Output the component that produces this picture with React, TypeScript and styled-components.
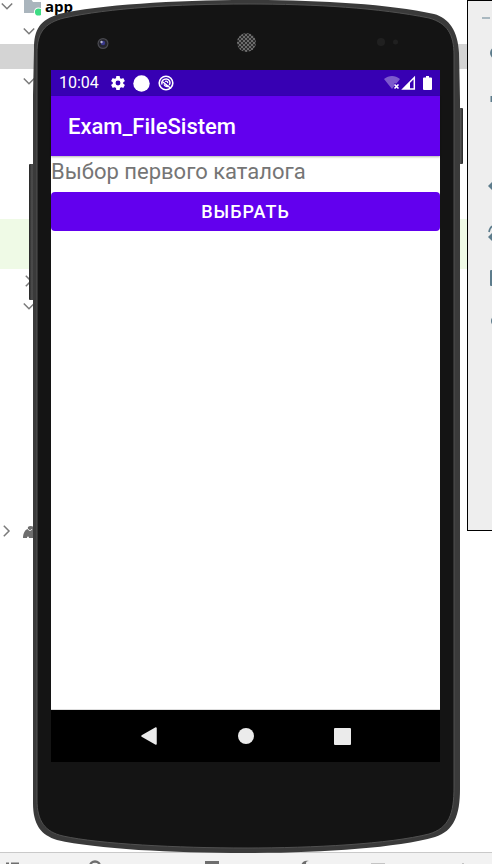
import React from "react";
import styled, { createGlobalStyle } from "styled-components";

const GlobalStyle = createGlobalStyle`
  * { box-sizing: border-box; }
  body { margin: 0; background: #ffffff; font-family: Roboto, "Liberation Sans", sans-serif; }
`;

const Desktop = styled.div`
  position: relative;
  display: flex;
  flex-direction: column;
  height: 100vh;
  overflow: hidden;
`;

const Workspace = styled.div`
  display: flex;
  flex: 1;
  min-height: 0;
  align-items: flex-start;
`;

const ProjectTree = styled.ul`
  flex: 1;
  min-width: 0;
  margin: -6px 0 0;
  padding: 0;
  list-style: none;
`;

const TreeRow = styled.li<{ $depth?: number; $tone?: "selected" | "added" }>`
  display: flex;
  align-items: center;
  gap: 8px;
  height: 25px;
  padding-left: ${(p) => (p.$depth ? 22 : 0)}px;
  background: ${(p) =>
    p.$tone === "selected" ? "#d4d4d4" : p.$tone === "added" ? "#effae6" : "transparent"};
  svg { flex: none; }
`;

const ModuleName = styled.span`
  margin-left: -4px;
  font: 700 15px/13px "Open Sans", sans-serif;
  color: #000000;
`;

const EmulatorTools = styled.aside`
  flex: none;
  width: 25px;
  height: 531px;
  overflow: hidden;
  border: 1px solid #000000;
  border-right: 0;
  background: #eeeeee;
  svg { display: block; }
`;

const ToolWindowBar = styled.footer`
  flex: none;
  height: 12px;
  overflow: hidden;
  border-top: 1px solid #c9c9c9;
  background: #f2f2f2;
  svg { display: block; width: 100%; }
`;

const Phone = styled.main`
  position: absolute;
  inset: 0 31px 10px 29px;
  display: flex;
  padding: 70px 21px 92px 22px;
`;

const PhoneShell = styled.svg`
  position: absolute;
  inset: 0;
  width: 100%;
  height: 100%;
  overflow: visible;
`;

const Screen = styled.section`
  position: relative;
  display: flex;
  flex: 1;
  min-width: 0;
  flex-direction: column;
  background: #ffffff;
`;

const StatusBar = styled.div`
  display: flex;
  align-items: center;
  justify-content: space-between;
  height: 26px;
  padding: 0 8px;
  background: #3700b3;
  color: #ffffff;
  font-size: 16px;
  line-height: 26px;
`;

const StatusGroup = styled.div<{ $gap: number }>`
  display: flex;
  align-items: center;
  gap: ${(p) => p.$gap}px;
  svg { display: block; }
`;

const Clock = styled.time`
  margin-right: 4px;
`;

const AppBar = styled.header`
  display: flex;
  align-items: center;
  height: 60px;
  padding: 2px 17px 0;
  background: #6200ee;
  box-shadow: 0 1px 2px rgba(0, 0, 0, 0.3);
`;

const Title = styled.h1`
  margin: 0;
  color: #ffffff;
  font-size: 22px;
  font-weight: 500;
  line-height: 28px;
`;

const Content = styled.div`
  display: flex;
  flex: 1;
  flex-direction: column;
  gap: 4px;
  border-bottom: 1px solid #dddddd;
`;

const Caption = styled.p`
  margin: 0;
  color: #757575;
  font-size: 22px;
  line-height: 32px;
`;

const SelectButton = styled.button`
  height: 39px;
  padding: 0 16px;
  border: 0;
  border-radius: 4px;
  background: #6200ee;
  color: #ffffff;
  font: 500 18px/24px Roboto, sans-serif;
  letter-spacing: 1px;
  text-transform: uppercase;
`;

const NavBar = styled.nav`
  display: grid;
  grid-template-columns: repeat(3, 97px);
  justify-content: center;
  height: 52px;
  background: #000000;
`;

const NavButton = styled.button`
  display: grid;
  place-items: center;
  padding: 0;
  border: 0;
  background: none;
  svg { display: block; }
`;

const Chevron = ({ open }: { open?: boolean }) => (
  <svg width="13" height="14" viewBox="0 0 13 14" fill="none" stroke="#7a7a7a" strokeWidth="1.5">
    <path d={open ? "M1.8 3.5 7 8.7 12.2 3.5" : "M3.8 .8 9 6 3.8 11.2"} />
  </svg>
);

const ModuleFolder = () => (
  <svg width="20" height="20" viewBox="0 0 20 20">
    <path d="M3 2h7l2 3h9v11H3z" fill="#aab5bd" />
    <circle cx="17.5" cy="15" r="4.6" fill="#fff" />
    <circle cx="17.5" cy="15" r="3.6" fill="#3ddc84" />
  </svg>
);

const GradleElephant = () => (
  <svg width="20" height="16" viewBox="0 0 20 16">
    <path d="M2 14C2 9 4.5 5 7 5 6 2.500 9 1 13 3c4 1 6 5 6 11h-4v-3H12v3H8c0-2-2-2-2 0z" fill="#6e6e6e" />
    <path d="M7 5c1 2 3 2 4 0" fill="none" stroke="#fff" strokeWidth="1" />
  </svg>
);

type Row = { depth?: number; tone?: "selected" | "added"; chevron?: "open" | "closed"; kind?: "module" | "gradle" };

const rows: Row[] = [
  { chevron: "open", kind: "module" },
  { depth: 1, chevron: "open" },
  { tone: "selected" },
  { depth: 1, chevron: "open" },
  {}, {}, {}, {}, {},
  { tone: "added" },
  { tone: "added" },
  { depth: 1, chevron: "closed" },
  { depth: 1, chevron: "open" },
  {}, {}, {}, {}, {}, {}, {}, {},
  { chevron: "closed", kind: "gradle" },
];

const ToolIcons = () => (
  <svg width="24" height="340" viewBox="0 0 24 340" fill="#5d7c8c">
    <path d="M14 16h8v2h-8z" fill="#a9b8c0" />
    <circle cx="28" cy="52" r="5" fill="none" stroke="#5d7c8c" strokeWidth="2" />
    <path d="M22.5 95h5v6h-5z" />
    <path d="m20 185 5-5v10z" />
    <path d="M21 231c1-5 3-6 5-6" fill="none" stroke="#5d7c8c" strokeWidth="1.7" />
    <path d="m20 236 5-5v10z" />
    <rect x="22" y="269" width="10" height="16" rx="1" />
    <circle cx="29" cy="320" r="6" />
  </svg>
);

const BottomIcons = () => (
  <svg height="11" viewBox="0 0 492 11" preserveAspectRatio="xMinYMin slice" fill="#6e6e6e">
    <path d="M6 9.5h3v2H6zM11 9.5h8v2h-8z" />
    <circle cx="95" cy="13.5" r="5" fill="none" stroke="#6e6e6e" strokeWidth="2.4" />
    <path d="M205 8h14v4h-14z" />
    <path d="M301 12c2-4 4-5 8-4-3 0-3 1-3 4z" />
    <path d="M371 10h14v2h-14zM462 10h2v2h-2z" fill="#c4c4c4" />
  </svg>
);

const BODY =
  "M4 95 5 49C5 29 11 20 30 14C70 5 145 0 218 0S358 4 405 14C420 18 429 31 430 53L431 100V789C431 815 425 831 406 837C367 848 292 853 217 853S68 849 28 840C12 835 4 825 4 803Z";
const FACE =
  "M8 95V53C8 33 15 23 35 18C80 8 148 4 218 4S350 8 400 18C418 23 425 34 425 55V787C425 814 420 828 400 834C360 844 285 848 217 848S70 844 34 836C16 832 8 821 8 800Z";

const Shell = () => (
  <PhoneShell viewBox="0 0 432 854" preserveAspectRatio="none" aria-hidden="true">
    <defs>
      <pattern id="grille" width="4" height="4" patternUnits="userSpaceOnUse">
        <rect width="4" height="4" fill="#6c6c6c" />
        <circle cx="1" cy="1" r="1" fill="#191919" />
        <circle cx="3" cy="3" r="1" fill="#191919" />
      </pattern>
      <linearGradient id="keys" x1="0" x2="1">
        <stop offset="0" stopColor="#252525" />
        <stop offset=".5" stopColor="#505050" />
        <stop offset="1" stopColor="#252525" />
      </linearGradient>
    </defs>
    <rect x="0" y="164" width="6" height="136" rx="1" fill="url(#keys)" />
    <rect x="429" y="108" width="5" height="56" rx="1" fill="url(#keys)" />
    <path d={BODY} fill="#3a3a3a" />
    <path d={FACE} fill="#141414" stroke="#505050" strokeWidth="1" />
    <circle cx="74" cy="43.5" r="5.5" fill="#4a4a50" />
    <circle cx="74" cy="43.5" r="4.3" fill="#24242c" />
    <circle cx="74" cy="43" r="2.2" fill="#38388a" />
    <circle cx="72.5" cy="42" r="1.2" fill="#b8b8d0" />
    <circle cx="217.5" cy="42.5" r="9.5" fill="url(#grille)" />
    <circle cx="352" cy="42" r="4" fill="#202020" />
    <circle cx="366.5" cy="42" r="2.5" fill="#202020" />
  </PhoneShell>
);

const Gear = () => (
  <svg width="14" height="14" viewBox="2 2 20 20" fill="#fff">
    <path d="M19.43 12.98c.04-.32.07-.64.07-.98s-.03-.66-.07-.98l2.11-1.65c.19-.15.24-.42.12-.64l-2-3.46c-.12-.22-.39-.3-.61-.22l-2.49 1c-.52-.4-1.08-.73-1.69-.98l-.38-2.65A.49.49 0 0 0 14 2h-4c-.25 0-.46.18-.49.42l-.38 2.65c-.61.25-1.17.59-1.69.98l-2.49-1c-.23-.09-.49 0-.61.22l-2 3.46c-.13.22-.07.49.12.64l2.11 1.65c-.04.32-.07.65-.07.98s.03.66.07.98l-2.11 1.65c-.19.15-.24.42-.12.64l2 3.46c.12.22.39.3.61.22l2.49-1c.52.4 1.08.73 1.69.98l.38 2.65c.03.24.24.42.49.42h4c.25 0 .46-.18.49-.42l.38-2.65c.61-.25 1.17-.59 1.69-.98l2.49 1c.23.09.49 0 .61-.22l2-3.46c.12-.22.07-.49-.12-.64zM12 15.5A3.5 3.5 0 1 1 12 8.5a3.5 3.5 0 0 1 0 7z" />
  </svg>
);

const Dot = () => (
  <svg width="17" height="17" viewBox="0 0 17 17"><circle cx="8.5" cy="8.5" r="8.2" fill="#fff" /></svg>
);

const DebugIcon = () => (
  <svg width="16" height="16" viewBox="0 0 16 16" fill="none" stroke="#fff">
    <circle cx="8" cy="8" r="6.8" strokeWidth="1.6" />
    <path d="M4 9.5C3 6 5.5 3.8 8.5 4c3 .2 4.500 3.500 2.800 6M5 7l8 6.500M6 9.500c1 2 3 2.300 5 1.500" strokeWidth="1.5" />
    <path d="M7 6.500c1.500-1 3 .2 2.700 1.700" strokeWidth="1.3" />
  </svg>
);

const SignalIcons = () => (
  <svg width="32" height="16" viewBox="0 0 32 16">
    <path d="M0 4C5 0 11 0 16 4l-3.5 4.5H10v3l-2 2.5z" fill="#fff" opacity=".35" />
    <path d="m10.5 9.5 4 4m0-4-4 4" stroke="#fff" strokeWidth="1.6" />
    <path d="M30.3 2.500v11.500H19z" fill="none" stroke="#fff" strokeWidth="1.5" />
    <path d="M26 7v7h-7z" fill="#fff" />
  </svg>
);

const Battery = () => (
  <svg width="9" height="16" viewBox="0 0 9 16">
    <path d="M3 1h3v1.5h2q1 0 1 1V14q0 1-1 1H1q-1 0-1-1V3.5q0-1 1-1h2z" fill="#fff" />
  </svg>
);

export default function App() {
  return (
    <>
      <GlobalStyle />
      <Desktop>
        <Workspace>
          <ProjectTree>
            {rows.map((row, i) => (
              <TreeRow key={i} $depth={row.depth} $tone={row.tone}>
                {row.chevron && <Chevron open={row.chevron === "open"} />}
                {row.kind === "module" && (
                  <>
                    <ModuleFolder />
                    <ModuleName>app</ModuleName>
                  </>
                )}
                {row.kind === "gradle" && <GradleElephant />}
              </TreeRow>
            ))}
          </ProjectTree>
          <EmulatorTools aria-label="Emulator tools">
            <ToolIcons />
          </EmulatorTools>
        </Workspace>
        <ToolWindowBar>
          <BottomIcons />
        </ToolWindowBar>
        <Phone>
          <Shell />
          <Screen>
            <StatusBar>
              <StatusGroup $gap={8}>
                <Clock>10:04</Clock>
                <Gear />
                <Dot />
                <DebugIcon />
              </StatusGroup>
              <StatusGroup $gap={7}>
                <SignalIcons />
                <Battery />
              </StatusGroup>
            </StatusBar>
            <AppBar>
              <Title>Exam_FileSistem</Title>
            </AppBar>
            <Content>
              <Caption>Выбор первого каталога</Caption>
              <SelectButton type="button">Выбрать</SelectButton>
            </Content>
            <NavBar>
              <NavButton type="button" aria-label="Back">
                <svg width="18" height="20" viewBox="0 0 18 20">
                  <path d="M16 2v16L2 10z" fill="#ebebeb" stroke="#ebebeb" strokeWidth="1.5" strokeLinejoin="round" />
                </svg>
              </NavButton>
              <NavButton type="button" aria-label="Home">
                <svg width="16" height="16" viewBox="0 0 16 16"><circle cx="8" cy="8" r="8" fill="#ebebeb" /></svg>
              </NavButton>
              <NavButton type="button" aria-label="Overview">
                <svg width="17" height="17" viewBox="0 0 17 17"><rect width="17" height="17" rx="1" fill="#ebebeb" /></svg>
              </NavButton>
            </NavBar>
          </Screen>
        </Phone>
      </Desktop>
    </>
  );
}
